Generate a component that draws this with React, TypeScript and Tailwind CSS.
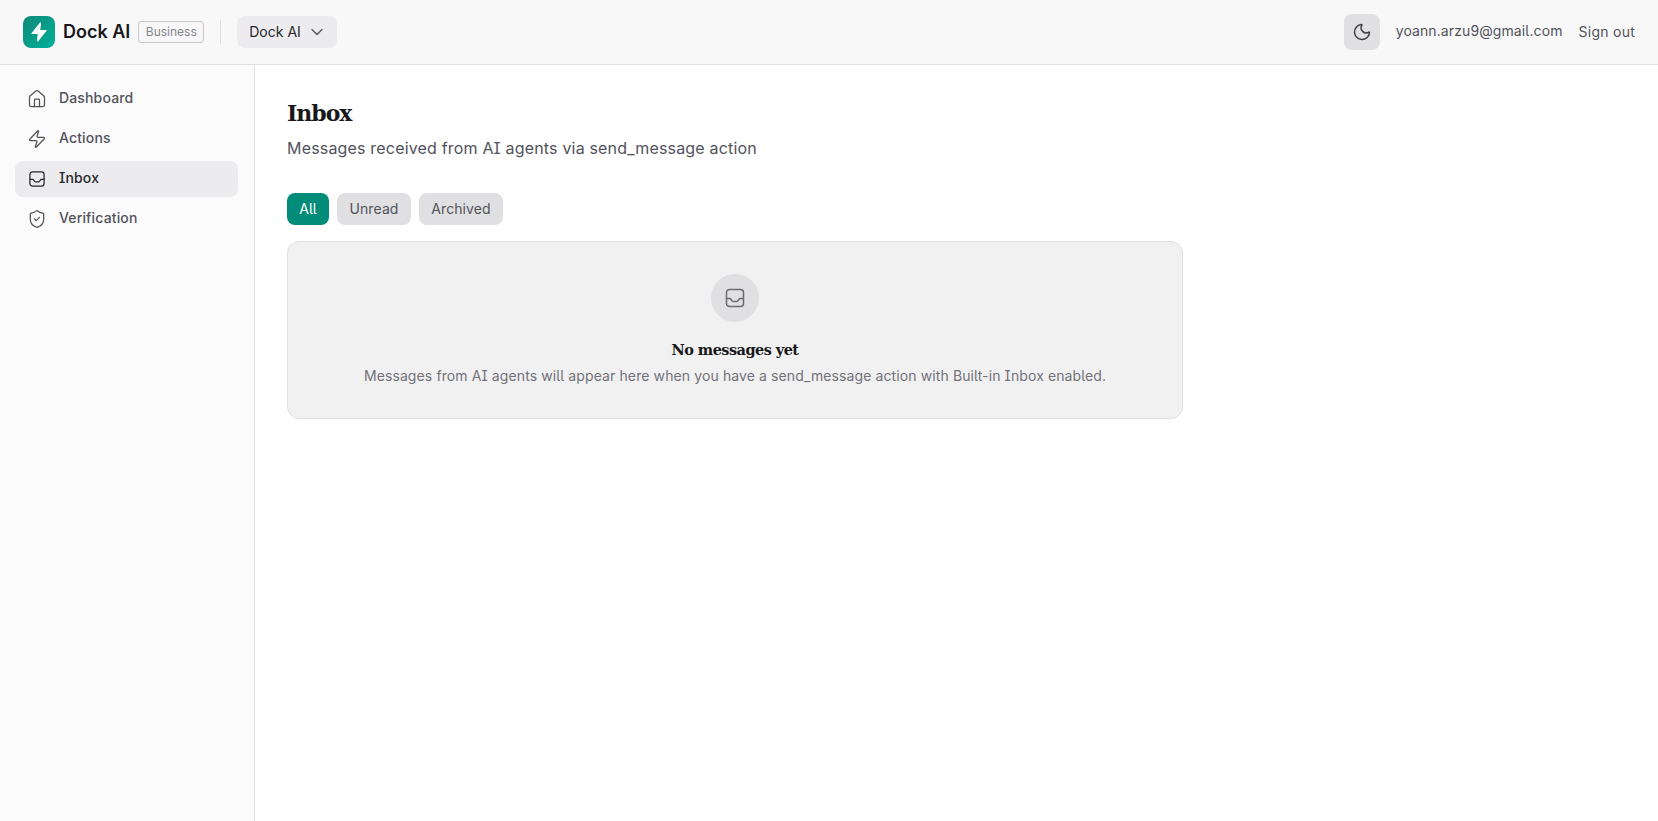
import { ChevronDown, House, Zap, ShieldCheck, Moon } from "lucide-react";

// lucide's Inbox has a different tray, this one is a rounded box with a notch
function TrayIcon({ className, strokeWidth = 1.5 }: { className?: string; strokeWidth?: number }) {
    return (
        <svg className={className} viewBox="0 0 24 24" fill="none" stroke="currentColor" strokeWidth={strokeWidth} strokeLinecap="round" strokeLinejoin="round">
            <rect x="3.5" y="3.5" width="17" height="17" rx="3" />
            <path d="M3.5 12.5h3c.8 0 1.4.4 1.8 1.1l.4.8c.4.7 1 1.1 1.8 1.1h3c.8 0 1.4-.4 1.8-1.1l.4-.8c.4-.7 1-1.1 1.8-1.1h3" />
        </svg>
    );
}

const navItems = [
    { label: "Dashboard", icon: House },
    { label: "Actions", icon: Zap },
    { label: "Inbox", icon: TrayIcon, active: true },
    { label: "Verification", icon: ShieldCheck },
];

function Header() {
    return (
        <header className="h-[65px] shrink-0 flex items-center justify-between pl-[23px] pr-[23px] bg-[#f8f8f8] border-b border-[#e1e1e3]">
            <div className="flex items-center [font-feature-settings:normal]">
                <div className="w-8 h-8 rounded-lg bg-gradient-to-br from-[#0d8a78] to-[#00b09b] flex items-center justify-center">
                    <svg width="22" height="22" viewBox="0 0 24 24" fill="#ffffff" stroke="#ffffff" strokeWidth="1.5" strokeLinejoin="round">
                        <path d="M13.5 2.5 4.5 13.5h7l-1 8 9-11h-7z" />
                    </svg>
                </div>
                <span className="ml-2 text-lg font-semibold text-[#18181b]">Dock AI</span>
                <span className="ml-2 h-[22px] px-[6.5px] flex items-center rounded-[3px] border border-[#c8c8cc] text-xs text-[#85858c]">Business</span>
                <div className="ml-4 w-px h-6 bg-[#e1e1e3]" />
                <button className="ml-4 h-8 w-[100px] px-3 pr-[10px] rounded-lg bg-[#ececee] flex items-center justify-between text-sm text-[#27272a]">
                    Dock AI
                    <ChevronDown className="w-5 h-5 text-[#52525b]" strokeWidth={1.5} />
                </button>
            </div>
            <div className="flex items-center text-sm text-[#52525b]">
                <button className="w-9 h-9 rounded-lg bg-[#e0e0e2] flex items-center justify-center">
                    <Moon className="w-5 h-5 text-[#3f3f46]" strokeWidth={1.75} />
                </button>
                <span className="ml-4 -translate-y-px tracking-[0.1px]">yoann.arzu9@gmail.com</span>
                <span className="ml-4 tracking-[0.25px]">Sign out</span>
            </div>
        </header>
    );
}

function Sidebar() {
    return (
        <aside className="w-[255px] shrink-0 bg-[#fbfbfb] border-r border-[#e1e1e3] pt-[16px] px-[15px] flex flex-col gap-1">
            {navItems.map((item) => {
                const Icon = item.icon;
                return (
                    <a
                        key={item.label}
                        className={
                            item.active
                                ? "h-9 w-[223px] pl-3 flex items-center gap-3 rounded-lg bg-[#ececee] text-sm font-[450] tracking-[0.15px] text-[#27272a]"
                                : "h-9 w-[223px] pl-3 flex items-center gap-3 rounded-lg text-sm font-[450] tracking-[0.15px] text-[#52525b]"
                        }
                    >
                        <Icon className="w-5 h-5" strokeWidth={1.5} />
                        <span className="-translate-y-px">{item.label}</span>
                    </a>
                );
            })}
        </aside>
    );
}

export default function App() {
    return (
        <div className="h-[821px] flex flex-col bg-white font-['Inter',sans-serif] [font-feature-settings:'cv05','cv08']">
            <Header />
            <div className="flex flex-1 min-h-0">
                <Sidebar />
                <main className="flex-1 pl-8 pt-8">
                    <h1 className="font-['DejaVu_Serif',serif] text-[22px] leading-8 font-bold tracking-[-1px] text-[#18181b]">Inbox</h1>
                    <p className="mt-[7px] text-base leading-6 tracking-[0.18px] text-[#52525b]">Messages received from AI agents via send_message action</p>
                    <div className="mt-[33px] flex gap-2 text-sm tracking-[0.1px]">
                        <button className="h-8 w-[42px] pb-px rounded-lg bg-[#008c78] text-white">All</button>
                        <button className="h-8 w-[74px] pb-px rounded-lg bg-[#e0e0e2] text-[#52525b]">Unread</button>
                        <button className="h-8 w-[84px] pb-px rounded-lg bg-[#e0e0e2] text-[#52525b]">Archived</button>
                    </div>
                    <div className="mt-4 w-[896px] h-[178px] rounded-xl border border-[#e1e1e3] bg-[#f1f1f1] pt-8 flex flex-col items-center">
                        <div className="w-12 h-12 rounded-full bg-[#e0e0e2] flex items-center justify-center">
                            <TrayIcon className="w-6 h-6 text-[#6b6b73]" strokeWidth={1.5} />
                        </div>
                        <h3 className="mt-4 font-['DejaVu_Serif',serif] text-[14.5px] leading-6 font-bold tracking-[-0.55px] text-[#18181b]">No messages yet</h3>
                        <p className="mt-1 text-sm leading-5 tracking-[0.11px] text-[#71717a]">Messages from AI agents will appear here when you have a send_message action with Built-in Inbox enabled.</p>
                    </div>
                </main>
            </div>
        </div>
    );
}
